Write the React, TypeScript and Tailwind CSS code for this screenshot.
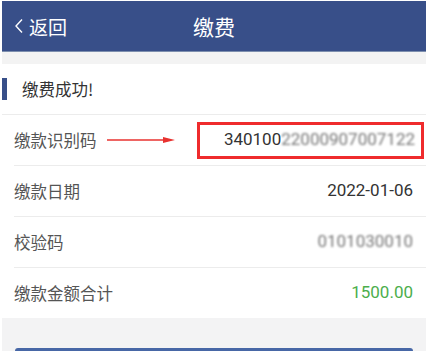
import React from "react";

const font = { fontFamily: '"Noto Sans CJK SC", "Noto Sans", sans-serif' };
const numFont = { fontFamily: 'Roboto, "Noto Sans", sans-serif' };

function Row({ label, children }: { label: string; children: React.ReactNode }) {
  return (
    <div className="ml-[12px] h-[51px] flex items-center justify-between pr-[13px] border-b border-[#ececec]">
      <span className="text-[16.5px] text-[#555]">{label}</span>
      {children}
    </div>
  );
}

export default function App() {
  return (
    <div className="w-[428px] h-[351px] bg-white px-[2px] pt-[1px] overflow-hidden" style={font}>
      <div className="h-[51px] bg-[#384f89] flex items-center relative border-b border-[#7d8fae]">
        <div className="flex items-center pl-[12px] text-white">
          <svg width="10" height="16" viewBox="0 0 10 16" className="mr-[5px]">
            <path d="M8 1.5 L2 8 L8 14.5" stroke="white" strokeWidth="1.4" fill="none" />
          </svg>
          <span className="text-[19px] leading-none">返回</span>
        </div>
        <div className="absolute left-0 right-0 text-center text-white text-[21px] leading-none pointer-events-none">缴费</div>
      </div>
      <div className="h-[12px] bg-[#f3f3f3]" />
      <div className="bg-white">
        <div className="h-[51px] flex items-center border-b border-[#ececec]">
          <div className="w-[5px] h-[22px] bg-[#384f89]" />
          <span className="ml-[15px] text-[16.5px] text-[#333]">缴费成功!</span>
        </div>
        <div className="ml-[12px] h-[51px] flex items-center border-b border-[#ececec] relative">
          <span className="text-[16.5px] text-[#555]">缴款识别码</span>
          <svg width="70" height="8" viewBox="0 0 70 8" className="ml-[10px]">
            <line x1="0" y1="4" x2="60" y2="4" stroke="#e8322f" strokeWidth="1.5" />
            <path d="M56 1 L68 4 L56 7 Z" fill="#e8322f" />
          </svg>
          <div className="ml-auto mr-[2px] w-[227px] h-[37px] border-[3px] border-[#ef2b2d] flex items-center justify-end pr-[6px]" style={numFont}>
            <span className="text-[17px] text-[#333]">340100</span>
            <span className="text-[17px] text-[#777] blur-[1.2px]">22000907007122</span>
          </div>
        </div>
        <Row label="缴款日期">
          <span className="text-[17px] text-[#333]" style={numFont}>2022-01-06</span>
        </Row>
        <Row label="校验码">
          <span className="text-[17px] text-[#777] blur-[1.2px]" style={numFont}>0101030010</span>
        </Row>
        <div className="ml-[12px] h-[50px] flex items-center justify-between pr-[13px]">
          <span className="text-[16.5px] text-[#555]">缴款金额合计</span>
          <span className="text-[17px] text-[#4cae4c]" style={numFont}>1500.00</span>
        </div>
      </div>
      <div className="h-[40px] bg-[#f3f3f4] px-[13px] pt-[30px]">
        <div className="h-[10px] bg-[#4767a6] rounded-t-[3px]" />
      </div>
    </div>
  );
}
